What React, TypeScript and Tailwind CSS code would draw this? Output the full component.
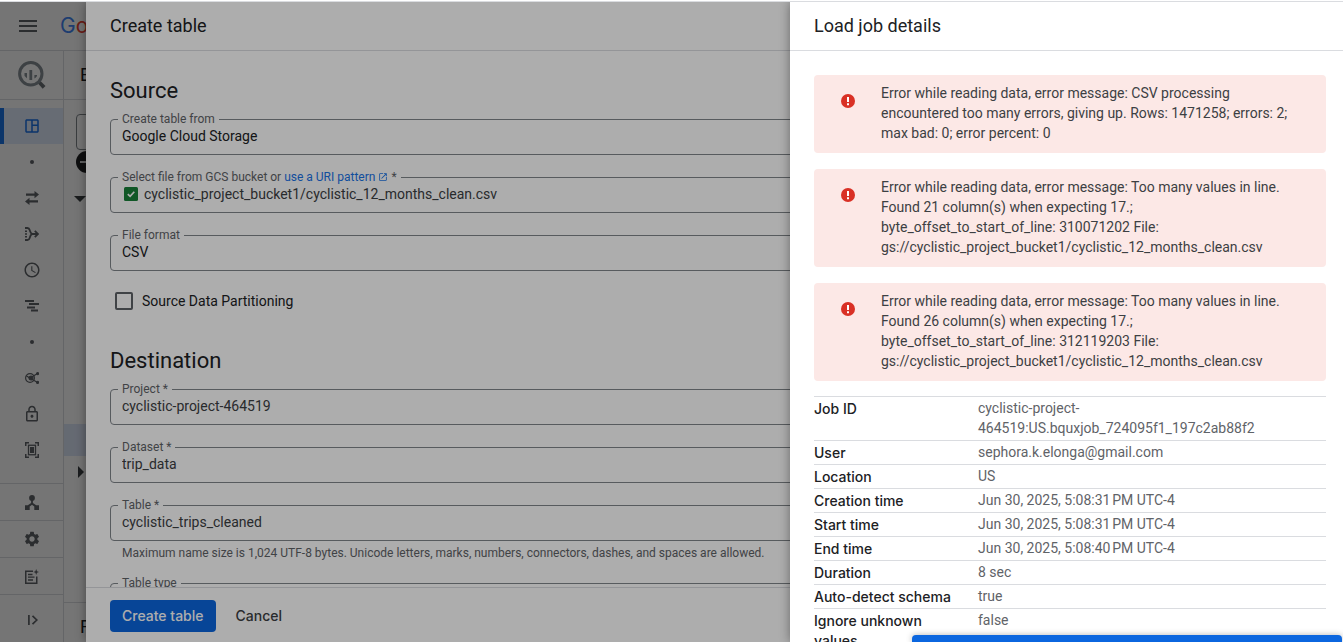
import React, { useState } from "react";
import { MdOutlineSpaceDashboard, MdSchedule, MdOutlineLock, MdSettings, MdMenu, MdOpenInNew } from "react-icons/md";

type RailItem = { label: string; icon?: React.ReactNode; active?: boolean };

const glyph = "h-[14px] w-[14px]";

const TransferIcon = () => (
  <svg viewBox="0 0 14 14" className={glyph} fill="currentColor">
    <path d="M1 2.500h8.500V0L14 3.600 9.500 7.200V4.800H1zM13 9.200H4.500V6.800L0 10.400 4.500 14v-2.500H13z" />
  </svg>
);

const MergeIcon = () => (
  <svg viewBox="0 0 14 14" className={glyph} fill="none" stroke="currentColor" strokeWidth="1.800">
    <path d="M0 1h2.500c2 0 2 1.500 2.500 3s1 3 2.500 3c-1.500 0-2 1.500-2.500 3s-.5 3-2.500 3H0M7 7h6M9.800 3.800L13 7l-3.200 3.200" />
    <path d="M0 4.300h2M0 7h2M0 9.700h2" strokeWidth="1.500" />
  </svg>
);

const GanttIcon = () => (
  <svg viewBox="0 0 14 14" className={glyph} fill="currentColor">
    <path d="M0 1h9v1.900H0zM4 4h10v1.900H4zM2 7.500h8v1.900H2zM6 10.500h7v1.900H6z" />
  </svg>
);

const ShareIcon = () => (
  <svg viewBox="0 0 14 14" className={glyph} fill="none" stroke="currentColor" strokeWidth="1.200">
    <circle cx="5" cy="7" r="4.400" />
    <path d="M1.500 5l3.500 2 7.500-4.500M5 7l7.500 4.500" />
    <circle cx="6" cy="7" r="2" fill="currentColor" />
    <circle cx="12.600" cy="2.600" r="1" fill="currentColor" />
    <circle cx="12.600" cy="11.400" r="1" fill="currentColor" />
  </svg>
);

const CapacityIcon = () => (
  <svg viewBox="0 0 14 16" className="h-4 w-[14px]" fill="none" stroke="currentColor" strokeWidth="1.500">
    <path d="M.75 4V.75H4M10 .75h3.250V4M13.250 12v3.250H10M4 15.250H.75V12" />
    <rect x="3.500" y="3.250" width="7" height="9.500" strokeWidth="1.300" />
    <rect x="5" y="5" width="4" height="6" fill="currentColor" stroke="none" />
  </svg>
);

const HierarchyIcon = () => (
  <svg viewBox="0 0 14 15" className="h-[15px] w-[14px]" fill="currentColor">
    <circle cx="7" cy="3" r="2.900" />
    <path d="M6.100 5h1.800v3l3.300 2.200H14V15H9.300v-3.600L7 9.800l-2.300 1.600V15H0v-4.800h2.800L6.100 8z" />
  </svg>
);

const NotesIcon = () => (
  <svg viewBox="0 0 14 15" className="h-[15px] w-[14px]" fill="none" stroke="currentColor" strokeWidth="1.500">
    <path d="M8 2.250H.75v12h11V7.500" />
    <path d="M3 5.500h4.500M3 8.200h6.500M3 11h5" strokeWidth="1.300" />
    <path d="M11.200 0l.8 2.200 2 .8-2 .8-.8 2.200-.8-2.200-2-.8 2-.8z" fill="currentColor" stroke="none" />
  </svg>
);

const ExpandIcon = () => (
  <svg viewBox="0 0 10 10" className="h-[10px] w-[10px]" fill="none" stroke="currentColor" strokeWidth="1.700">
    <path d="M.9 0v10M4.500 .8L8.800 5 4.500 9.200" />
  </svg>
);

const BigQueryIcon = () => (
  <svg viewBox="0 0 30 30" className="h-[30px] w-[30px]">
    <path d="M22 23.500l2.500-2.500 5 5-2.800 2.700z" fill="#6b7075" />
    <circle cx="14.800" cy="13.800" r="11.200" fill="none" stroke="#868e95" strokeWidth="3" />
    <path d="M8.500 13h2.500v5.200c-1-.6-1.900-1.400-2.500-2.400zM13.400 10h2.800v10h-2.800zM18.400 15h2.600v1c-.6 1-1.600 1.900-2.600 2.400z" fill="#868e95" />
  </svg>
);

const ErrorIcon = () => (
  <svg viewBox="0 0 14 14" className="mt-[19px] h-[14px] w-[14px] shrink-0">
    <circle cx="7" cy="7" r="7" fill="#d93025" />
    <path d="M6 3h2v5H6zM6 9.200h2v2H6z" fill="#fff" />
  </svg>
);

const railItems: RailItem[] = [
  { label: "Studio", icon: <MdOutlineSpaceDashboard size={18} />, active: true },
  { label: "" },
  { label: "Data transfers", icon: <TransferIcon /> },
  { label: "Pipelines", icon: <MergeIcon /> },
  { label: "Scheduled queries", icon: <MdSchedule size={18} /> },
  { label: "Jobs", icon: <GanttIcon /> },
  { label: "" },
  { label: "Sharing", icon: <ShareIcon /> },
  { label: "Policy tags", icon: <MdOutlineLock size={18} /> },
  { label: "Capacity", icon: <CapacityIcon /> },
];

const railFooter: RailItem[] = [
  { label: "Partner center", icon: <HierarchyIcon /> },
  { label: "Settings", icon: <MdSettings size={18} /> },
  { label: "Release notes", icon: <NotesIcon /> },
];

const errors = [
  "Error while reading data, error message: CSV processing encountered too many errors, giving up. Rows: 1471258; errors: 2; max bad: 0; error percent: 0",
  "Error while reading data, error message: Too many values in line. Found 21 column(s) when expecting 17.; byte_offset_to_start_of_line: 310071202 File: gs://cyclistic_project_bucket1/cyclistic_12_months_clean.csv",
  "Error while reading data, error message: Too many values in line. Found 26 column(s) when expecting 17.; byte_offset_to_start_of_line: 312119203 File: gs://cyclistic_project_bucket1/cyclistic_12_months_clean.csv",
];

const details: [string, string][] = [
  ["Job ID", "cyclistic-project-464519:US.bquxjob_724095f1_197c2ab88f2"],
  ["User", "sephora.k.elonga@gmail.com"],
  ["Location", "US"],
  ["Creation time", "Jun 30, 2025, 5:08:31\u202fPM UTC-4"],
  ["Start time", "Jun 30, 2025, 5:08:31\u202fPM UTC-4"],
  ["End time", "Jun 30, 2025, 5:08:40\u202fPM UTC-4"],
  ["Duration", "8 sec"],
  ["Auto-detect schema", "true"],
  ["Ignore unknown values", "false"],
];

function Field({ id, label, children }: { id: string; label: React.ReactNode; children: React.ReactNode }) {
  return (
    <fieldset className="min-w-0 rounded border border-[#80868b] pb-[7px] pl-[11px]">
      <legend className="-ml-1 h-3 px-1 text-xs leading-3 text-[#5f6368]">
        <label htmlFor={id}>{label}</label>
      </legend>
      {children}
    </fieldset>
  );
}

const control = "block h-[22px] w-full appearance-none bg-transparent text-sm outline-none";

function SelectField({ id, label, value }: { id: string; label: string; value: string }) {
  return (
    <Field id={id} label={label}>
      <select id={id} className={control + " text-[#202124]"}>
        <option>{value}</option>
      </select>
    </Field>
  );
}

function TextField({ id, label, value }: { id: string; label: string; value: string }) {
  const [text, setText] = useState(value);
  return (
    <Field id={id} label={label}>
      <input id={id} value={text} onChange={(e) => setText(e.target.value)} className={control + " text-[#3c4043]"} />
    </Field>
  );
}

function Rail() {
  return (
    <nav className="flex w-16 shrink-0 flex-col border-r border-[#dadce0] text-[#5f6368]">
      <div className="flex h-[49px] shrink-0 items-center border-b border-[#dadce0] pl-4">
        <BigQueryIcon />
      </div>
      <div className="mt-2 flex-1">
        {railItems.map((item, i) =>
          item.icon ? (
            <button
              key={i}
              aria-label={item.label}
              className={
                item.active
                  ? "flex h-9 w-full items-center justify-center border-l-4 border-[#1a73e8] bg-[#e0eafd] pr-[3px] text-[#1a73e8]"
                  : "flex h-9 w-full items-center justify-center pl-px"
              }
            >
              {item.icon}
            </button>
          ) : (
            <div key={i} className="flex h-9 items-center justify-center pl-px">
              <span className="h-1 w-1 rounded-full bg-current" />
            </div>
          ),
        )}
      </div>
      {railFooter.map((item) => (
        <button
          key={item.label}
          aria-label={item.label}
          className="flex h-[37px] shrink-0 items-center justify-center border-t border-[#dadce0] pl-px"
        >
          {item.icon}
        </button>
      ))}
      <button
        aria-label="Expand"
        className="flex h-12 shrink-0 items-center justify-center border-t border-[#dadce0] pl-[2px] pt-[2px]"
      >
        <ExpandIcon />
      </button>
    </nav>
  );
}

function Workspace() {
  return (
    <div className="flex h-full flex-col">
      <header className="flex h-[49px] shrink-0 items-center border-b border-[#dadce0] pl-4 text-[#5f6368]">
        <button aria-label="Menu">
          <MdMenu size={24} />
        </button>
        <span className="ml-5 font-['Inter','Roboto',sans-serif] text-[21px]">
          <span className="text-[#4285f4]">G</span>
          <span className="text-[#ea4335]">o</span>
        </span>
      </header>
      <div className="flex min-h-0 flex-1">
        <Rail />
        <div className="flex flex-1 flex-col">
          <div className="flex h-[49px] shrink-0 items-center border-b border-[#dadce0] pl-4 text-lg text-[#202124]">E</div>
          <div className="ml-3 mt-[14px] h-9 w-60 shrink-0 rounded border border-[#80868b]" />
          <svg viewBox="0 0 22 22" className="ml-3 mt-px h-[22px] w-[22px] shrink-0">
            <circle cx="11" cy="11" r="11" fill="#202124" />
            <path d="M4 10.200h14v1.600H4z" fill="#fff" />
          </svg>
          <svg viewBox="0 0 12 6" className="ml-[10px] mt-[23px] h-[6px] w-3 shrink-0" fill="#3c4043">
            <path d="M0 0h12L6 6z" />
          </svg>
          <div className="mt-[222px] h-8 shrink-0 bg-[#dde6fa]" />
          <svg viewBox="0 0 6 12" className="ml-[14px] mt-[10px] h-3 w-[6px] shrink-0" fill="#3c4043">
            <path d="M0 0l6 6-6 6z" />
          </svg>
          <div className="mt-auto flex h-10 shrink-0 items-center border-t border-[#dadce0] pl-4 pt-2 text-lg text-[#202124]">F</div>
        </div>
      </div>
    </div>
  );
}

function CreateTable() {
  return (
    <section className="absolute inset-y-0 left-[86px] right-0 flex flex-col bg-white text-sm text-[#202124] shadow-[0_0_10px_rgba(0,0,0,0.4)]">
      <header className="flex h-[49px] shrink-0 items-center border-b border-[#dadce0] px-6">
        <h1 className="text-lg">Create table</h1>
      </header>
      <form id="create-table" className="min-h-0 flex-1 overflow-hidden px-6 pt-[26px]">
        <h2 className="mb-2 text-[22px] leading-7">Source</h2>
        <div className="flex flex-col gap-4">
          <SelectField id="source" label="Create table from" value="Google Cloud Storage" />
          <Field
            id="file"
            label={
              <>
                Select file from GCS bucket or{" "}
                <a href="#uri-pattern" className="text-[#1a73e8]">
                  use a URI pattern <MdOpenInNew size={10} className="inline align-[-1px]" />
                </a>{" "}
                *
              </>
            }
          >
            <div className="flex items-center gap-[6px] pl-[2px]">
              <svg viewBox="0 0 14 14" className="h-[14px] w-[14px] shrink-0">
                <rect width="14" height="14" rx="1.500" fill="#188038" />
                <path d="M3.800 7.200l2.300 2.200 4.200-4.600" fill="none" stroke="#fff" strokeWidth="1.700" />
              </svg>
              <input
                id="file"
                defaultValue="cyclistic_project_bucket1/cyclistic_12_months_clean.csv"
                className={control + " text-[#3c4043]"}
              />
            </div>
          </Field>
          <SelectField id="format" label="File format" value="CSV" />
        </div>
        <label className="mt-5 flex h-5 items-center gap-[9px] pl-[5px]">
          <input type="checkbox" className="h-[18px] w-[18px] appearance-none rounded-[2px] border-2 border-[#5f6368]" />
          Source Data Partitioning
        </label>
        <h2 className="mb-2 mt-9 text-[22px] leading-7">Destination</h2>
        <div className="flex flex-col gap-4">
          <TextField id="project" label="Project *" value="cyclistic-project-464519" />
          <TextField id="dataset" label="Dataset *" value="trip_data" />
          <div>
            <TextField id="table" label="Table *" value="cyclistic_trips_cleaned" />
            <p className="mt-1 pl-3 text-xs leading-4 text-[#5f6368]">
              Maximum name size is 1,024 UTF-8 bytes. Unicode letters, marks, numbers, connectors, dashes, and spaces are allowed.
            </p>
          </div>
          <SelectField id="type" label="Table type" value="Native table" />
        </div>
      </form>
      <footer className="flex h-[55px] shrink-0 items-center gap-2 border-t border-[#dadce0] px-6 pt-[2px] font-['Inter','Roboto',sans-serif] font-medium">
        <button form="create-table" type="button" className="h-8 rounded bg-[#0b66df] px-3 text-white">
          Create table
        </button>
        <button type="button" className="h-8 px-3 text-[#3c4043]">
          Cancel
        </button>
      </footer>
    </section>
  );
}

function JobDetails() {
  return (
    <aside className="absolute inset-y-0 right-0 flex w-[553px] max-w-full flex-col bg-white text-sm leading-5 text-[#202124] shadow-[0_0_10px_rgba(0,0,0,0.4)]">
      <header className="flex h-[49px] shrink-0 items-center border-b border-[#dadce0] px-6">
        <h1 className="text-lg">Load job details</h1>
      </header>
      <div className="min-h-0 flex-1 overflow-hidden pl-6 pr-[17px] pt-6">
        <div className="flex flex-col gap-4">
          {errors.map((message) => (
            <div key={message} role="alert" className="flex gap-[26px] rounded bg-[#fce8e6] pb-[10px] pl-[27px] pr-6">
              <ErrorIcon />
              <p className="min-w-0 pt-2 text-[#3c4043]">{message}</p>
            </div>
          ))}
        </div>
        <table className="mt-[15px] w-full border-collapse text-left align-top">
          <tbody>
            {details.map(([name, value]) => (
              <tr key={name} className="border-t border-[#dadce0]">
                <th
                  scope="row"
                  className="w-[164px] pb-px pr-6 pt-[2px] align-top font-['Inter','Roboto',sans-serif] font-medium"
                >
                  {name}
                </th>
                <td className="pb-[2px] pt-px align-top text-[#5f6368]">{value}</td>
              </tr>
            ))}
          </tbody>
        </table>
      </div>
      <div className="absolute bottom-0 right-px h-[7px] w-[430px] rounded-t bg-[#0b66df] shadow-[0_0_6px_rgba(0,0,0,0.3)]" />
    </aside>
  );
}

export default function App() {
  return (
    <div className="flex h-screen flex-col overflow-hidden bg-white font-['Roboto','Liberation_Sans',sans-serif]">
      <div className="h-[2px] shrink-0 border-b border-[#dadce0]" />
      <main className="relative min-h-0 flex-1 overflow-hidden">
        <Workspace />
        <div className="absolute inset-0 bg-black/32" />
        <CreateTable />
        <div className="absolute inset-0 bg-black/32" />
        <JobDetails />
      </main>
    </div>
  );
}
